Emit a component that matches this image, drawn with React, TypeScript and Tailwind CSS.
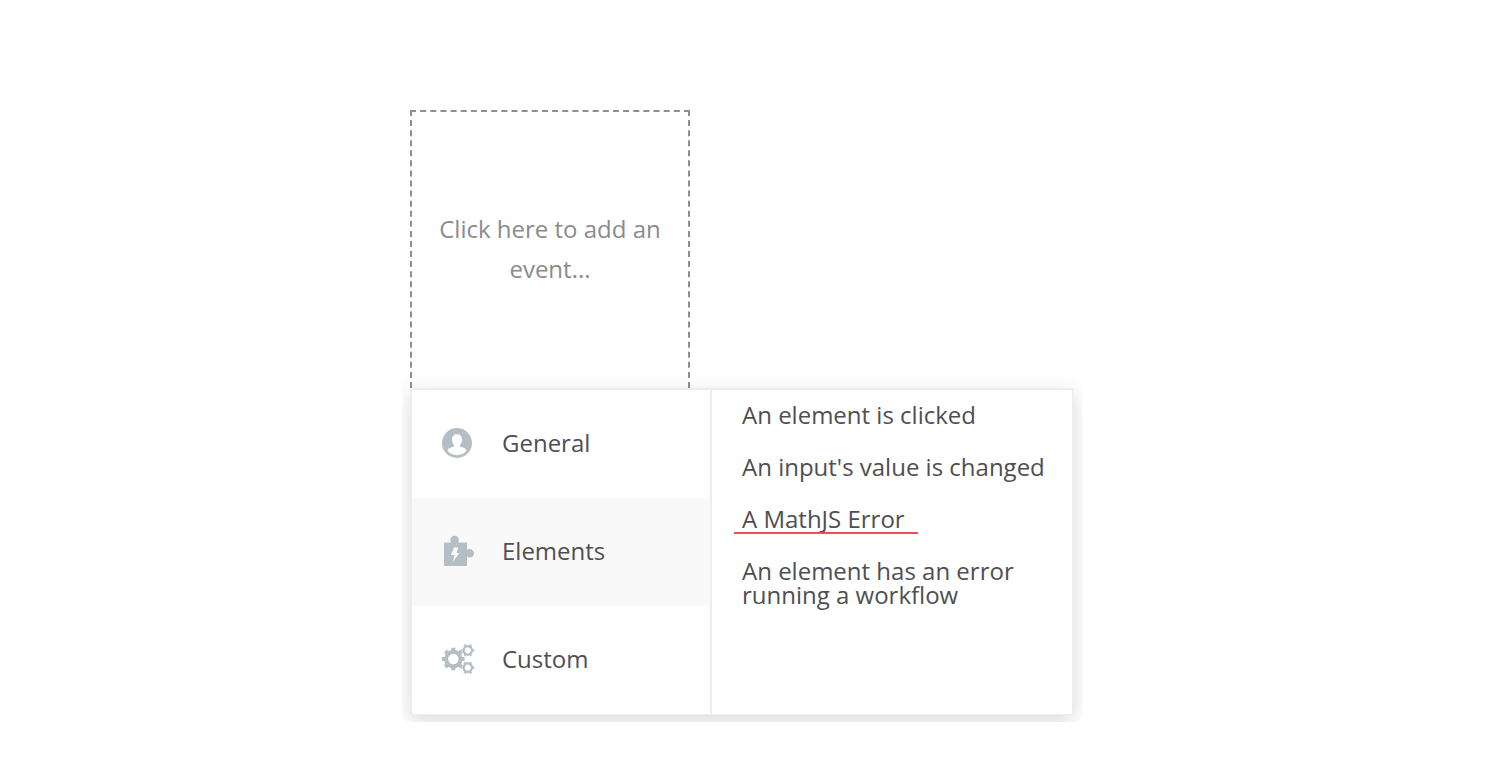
const events = [
  { label: "An element is clicked", marked: false },
  { label: "An input's value is changed", marked: false },
  { label: "A MathJS Error", marked: true },
  { label: "An element has an error running a workflow", marked: false },
];

function UserIcon() {
  return (
    <svg viewBox="0 0 30 30" className="w-[30px] h-[30px] fill-[#b4bfc4]">
      <circle cx="15" cy="15" r="15" />
      <path
        className="fill-white"
        d="M15 6.200c-3 0-5 2-5 5.200 0 2.600 1 4.700 2.200 5.700v1.500c-3.600.8-6.200 1.900-6.700 4C8 26 11.300 27.200 15 27.200s7-1.200 9.500-4.600c-.5-2.100-3.100-3.200-6.700-4v-1.500c1.200-1 2.200-3.100 2.200-5.700 0-3.200-2-5.200-5-5.200z"
      />
    </svg>
  );
}

function PluginIcon() {
  return (
    <svg viewBox="0 0 32 32" className="w-8 h-8 fill-[#b4bfc4]">
      <path d="M2 7.500h7.200C8.600 6.800 8.300 6 8.300 5a4.300 4.300 0 0 1 8.600 0c0 1-.3 1.800-.9 2.500h9v7.300c.8-.6 1.700-.9 2.700-.9a4.300 4.300 0 0 1 0 8.600c-1 0-1.900-.3-2.700-.9V31H2z" />
      <path className="fill-[#f9f9f9]" d="M12 12.500h4.200l-1.700 5.500h3L11 26.500l1.500-6.500H9z" />
    </svg>
  );
}

function Gear({ cx, cy, r, spin }: { cx: number; cy: number; r: number; spin: number }) {
  const teeth = r > 7 ? [0, 45, 90, 135, 180, 225, 270, 315] : [0, 60, 120, 180, 240, 300];
  return (
    <g transform={`translate(${cx} ${cy}) rotate(${spin})`}>
      <circle r={r * 0.64} fill="none" strokeWidth={r * 0.36} />
      {teeth.map((angle) => (
        <line key={angle} y1={-r * 0.75} y2={-r} strokeWidth={r * 0.36} transform={`rotate(${angle})`} />
      ))}
    </g>
  );
}

function GearsIcon() {
  return (
    <svg viewBox="0 0 34 32" className="w-[34px] h-8 stroke-[#b4bfc4]">
      <Gear cx={11.3} cy={16} r={11.3} spin={0} />
      <Gear cx={25.8} cy={7.3} r={6.5} spin={30} />
      <Gear cx={25.8} cy={24.7} r={6.5} spin={30} />
    </svg>
  );
}

const categories = [
  { label: "General", icon: <UserIcon />, active: false },
  { label: "Elements", icon: <PluginIcon />, active: true },
  { label: "Custom", icon: <GearsIcon />, active: false },
];

export default function App() {
  return (
    <div className="h-[782px] bg-white font-['Open_Sans',sans-serif] text-2xl text-[#4f4f52]">
      <main className="ml-[402px] w-[680px] h-[722px] pl-2 pt-[110px] rounded-b-lg overflow-hidden">
        <button className="flex w-[280px] h-[278px] px-5 pb-0.5 items-center justify-center border-2 border-b-0 border-dashed border-[#8f8f8f] text-center leading-10 text-[#8b8b8b]">
          Click here to add an event...
        </button>
        <div className="flex w-[664px] h-[327px] border-2 border-b border-[#ededed] bg-white shadow-[0_6px_20px_rgba(0,0,0,0.15)]">
          <ul className="w-[300px] border-r-2 border-[#ededed]">
            {categories.map(({ label, icon, active }) => (
              <li key={label} className={`flex h-[108px] pl-[30px] pb-0.5 items-center ${active ? "bg-[#f9f9f9]" : ""}`}>
                <span className="w-[60px]">{icon}</span>
                {label}
              </li>
            ))}
          </ul>
          <ul className="flex flex-1 flex-col gap-7 pl-[30px] pt-[13px] leading-6">
            {events.map(({ label, marked }) => (
              <li key={label} className="relative w-[310px]">
                {label}
                {marked && <span className="absolute -left-2 top-[25px] w-[184px] h-0.5 bg-[#f84a55]" />}
              </li>
            ))}
          </ul>
        </div>
      </main>
    </div>
  );
}
